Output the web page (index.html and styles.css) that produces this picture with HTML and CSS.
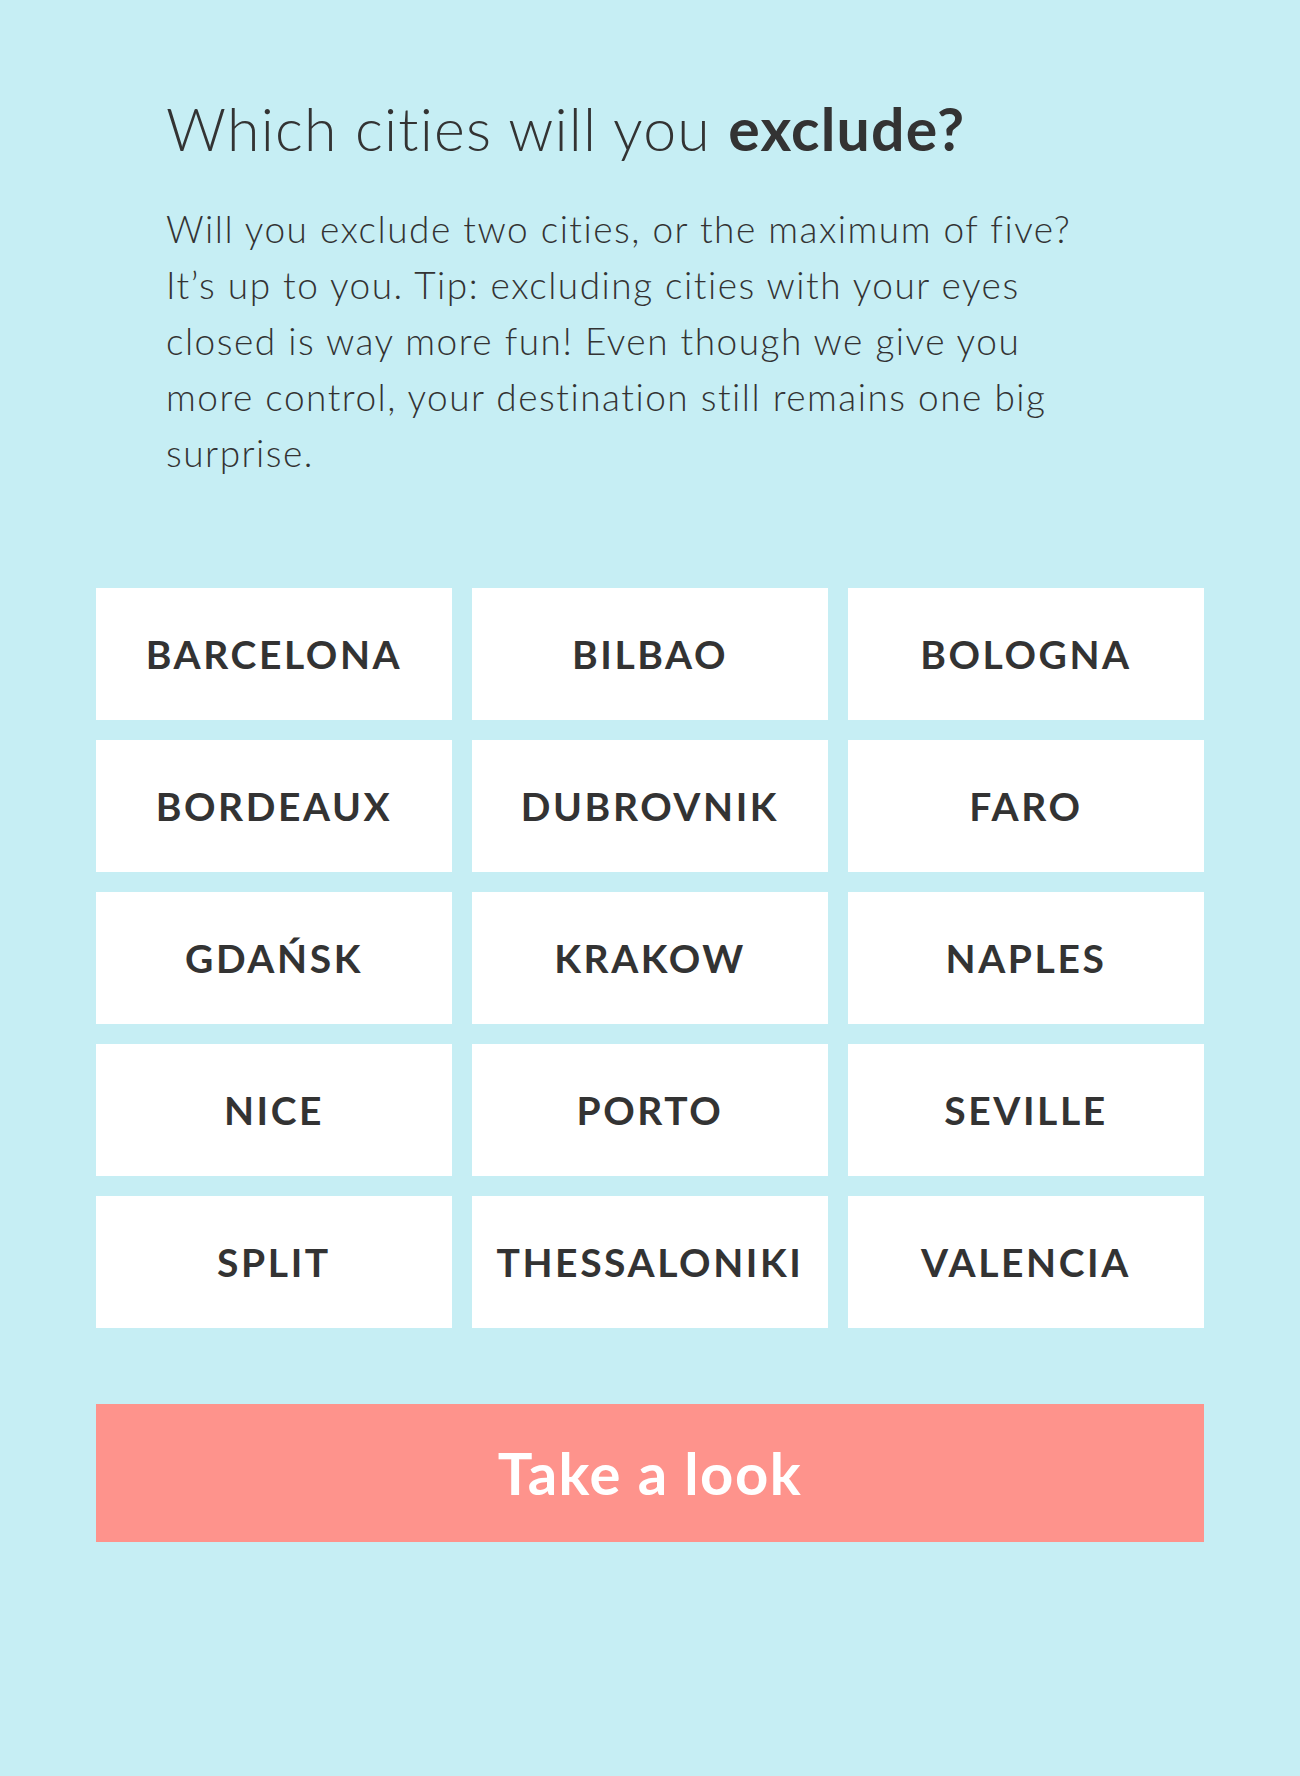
FILE: index.html
```html
<!DOCTYPE html>
<html lang="en">
<head>
    <meta charset="UTF-8">
    <meta name="viewport" content="width=device-width, initial-scale=1.0">
    <title>Exclude cities</title>
    <link rel="stylesheet" href="styles.css">
</head>
<body>

    <div class="page">
        <div class="intro">
            <h1>Which cities will you <strong>exclude?</strong></h1>
            <p>Will you exclude two cities, or the maximum of five? It’s up to you. Tip: excluding cities with your eyes closed is way more fun! Even though we give you more control, your destination still remains one big surprise.</p>
        </div>

        <div class="city-grid">
            <button class="city">Barcelona</button>
            <button class="city">Bilbao</button>
            <button class="city">Bologna</button>
            <button class="city">Bordeaux</button>
            <button class="city">Dubrovnik</button>
            <button class="city">Faro</button>
            <button class="city">Gdańsk</button>
            <button class="city">Krakow</button>
            <button class="city">Naples</button>
            <button class="city">Nice</button>
            <button class="city">Porto</button>
            <button class="city">Seville</button>
            <button class="city">Split</button>
            <button class="city">Thessaloniki</button>
            <button class="city">Valencia</button>
        </div>

        <button class="take-look">Take a look</button>
    </div>

</body>
</html>
```

FILE: styles.css
```css
body {
    margin: 0;
    background: #c6eef4;
    font-family: Lato, "Open Sans", sans-serif;
    font-variant-ligatures: none;
    color: #333333;
}

.page {
    padding: 94px 96px 200px;
}

.intro {
    padding: 0 70px;
}

h1 {
    font-size: 59px;
    font-weight: 300;
    line-height: 1.2;
    letter-spacing: 1.2px;
    margin: 0 0 36px;
}

h1 strong {
    font-weight: 700;
}

p {
    font-size: 37px;
    font-weight: 300;
    line-height: 56px;
    letter-spacing: 1.5px;
    margin: 0;
    max-width: 940px;
}

.city-grid {
    display: grid;
    grid-template-columns: repeat(3, 1fr);
    gap: 20px;
    margin-top: 107px;
}

.city {
    height: 132px;
    background: #ffffff;
    border: none;
    font-family: inherit;
    font-size: 39px;
    font-weight: 700;
    color: #333333;
    text-transform: uppercase;
    letter-spacing: 2.6px;
    cursor: pointer;
}

.take-look {
    display: block;
    width: 100%;
    height: 138px;
    margin-top: 76px;
    background: #fe938c;
    border: none;
    color: #ffffff;
    font-family: inherit;
    font-size: 58px;
    font-weight: 700;
    letter-spacing: 1.5px;
    cursor: pointer;
}
```
